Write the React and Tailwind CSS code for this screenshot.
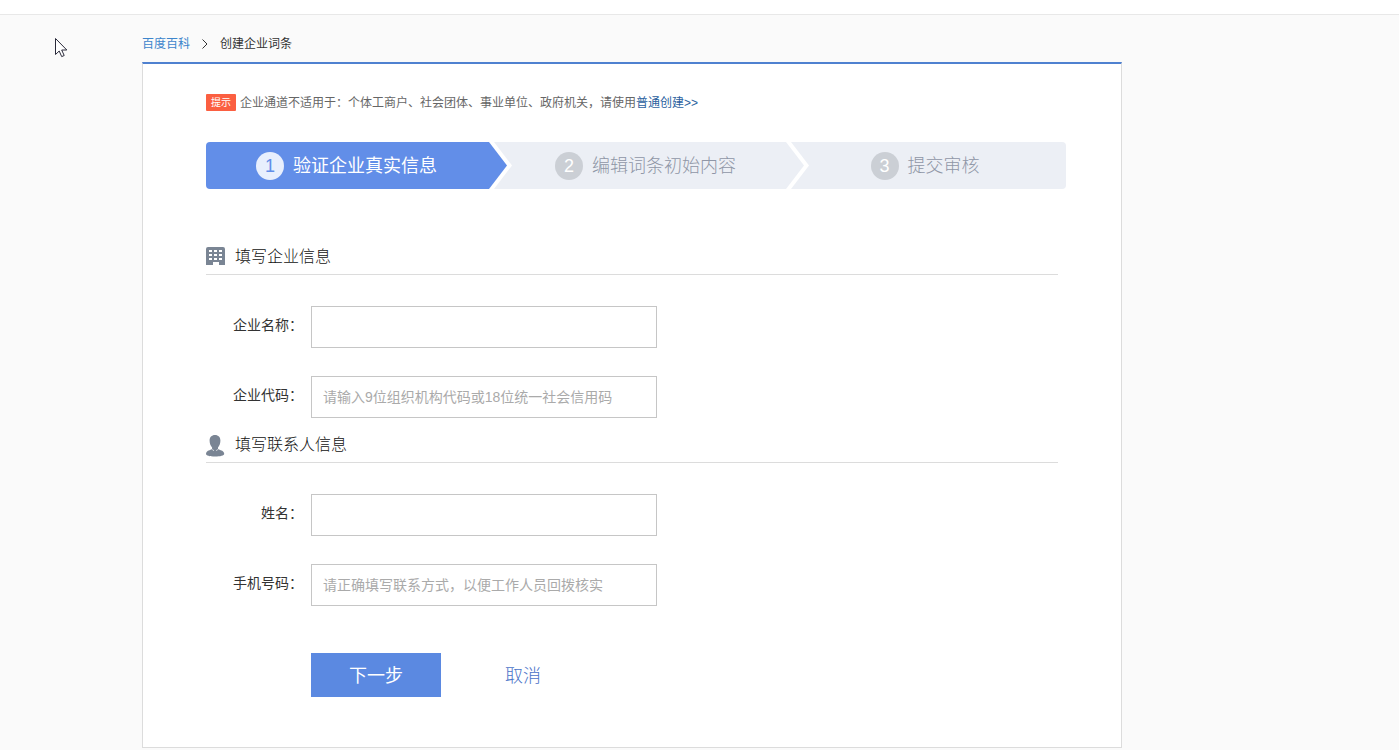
import { useState } from 'react'

const steps = [
  { no: 1, title: '验证企业真实信息', grow: 'flex-[283]', inner: '' },
  { no: 2, title: '编辑词条初始内容', grow: 'flex-[297]', inner: 'pl-[18px]' },
  { no: 3, title: '提交审核', grow: 'flex-[280]', inner: '' },
]

const sections = [
  {
    title: '填写企业信息',
    icon: BuildingIcon,
    fields: [
      { id: 'company', label: '企业名称：', placeholder: '' },
      { id: 'code', label: '企业代码：', placeholder: '请输入9位组织机构代码或18位统一社会信用码' },
    ],
  },
  {
    title: '填写联系人信息',
    icon: PersonIcon,
    fields: [
      { id: 'contact', label: '姓名：', placeholder: '' },
      { id: 'phone', label: '手机号码：', placeholder: '请正确填写联系方式，以便工作人员回拨核实' },
    ],
  },
]

function BuildingIcon() {
  return (
    <svg width="19" height="20" viewBox="0 0 19 20" aria-hidden="true">
      <path
        fill="#7a8594"
        fillRule="evenodd"
        d="M2 0h15a2 2 0 0 1 2 2v16h-6v-3H7v3H0V2a2 2 0 0 1 2-2zM3 3v2h3V3zM8 3v2h3V3zM13 3v2h3V3zM3 7v2h3V7zM8 7v2h3V7zM13 7v2h3V7zM3 11v2h3v-2zM8 11v2h3v-2zM13 11v2h3v-2z"
      />
    </svg>
  )
}

function PersonIcon() {
  return (
    <svg width="19" height="22" viewBox="0 0 19 22" className="mt-0.5" aria-hidden="true">
      <path
        fill="#7a8594"
        d="M9 0c3.400 0 5.400 2.200 5.400 5.600 0 2.900-.9 5.200-2.400 6.900v1.300c.3.700 1.300 1 2.700 1.400 2.400.7 3.500 1.800 3.500 3.600 0 2-3.900 2.700-9.200 2.700S0 20.800 0 18.800c0-1.800 1.100-2.900 3.500-3.600 1.400-.4 2.300-.7 2.600-1.400v-1.300C4.500 10.800 3.600 8.500 3.600 5.600 3.600 2.200 5.600 0 9 0z"
      />
      <path d="M6.500 14.200l1.200 1.800M11.600 14.200l-1.200 1.800" stroke="#fff" strokeWidth="0.700" />
    </svg>
  )
}

function Step({ step, active }) {
  return (
    <li className={`relative ${step.grow} ${active ? 'bg-[#628ee8]' : 'bg-[#eceff5]'}`}>
      {/* Arrow head of the previous step */}
      {step.no > 1 && (
        <svg className="absolute left-0 top-0" width="24" height="47" viewBox="0 0 24 47" aria-hidden="true">
          <path d="M0 0h5l18 23.500L5 47H0z" fill="#fff" />
          <path d="M0 0l18 23.500L0 47z" fill={step.no === 2 ? '#628ee8' : '#eceff5'} />
        </svg>
      )}
      <div className={`flex h-[47px] items-center justify-center gap-[9px] pr-0.5 ${step.inner}`}>
        <span
          className={`flex size-7 items-center justify-center rounded-full text-lg ${
            active ? 'bg-[#e8effd] text-[#628ee8]' : 'bg-[#cbcfd5] text-white'
          }`}
        >
          {step.no}
        </span>
        <span className={`text-lg ${active ? 'text-white' : 'font-light text-[#8f96a6]'}`}>{step.title}</span>
      </div>
    </li>
  )
}

function Field({ field, value, onChange }) {
  return (
    <div className="flex gap-2">
      <label htmlFor={field.id} className="w-[97px] shrink-0 text-right text-sm leading-[38px]">
        {field.label}
      </label>
      <input
        id={field.id}
        type="text"
        value={value}
        onChange={onChange}
        placeholder={field.placeholder}
        className="h-[42px] w-[346px] border border-[#c6c6c6] bg-white px-[11px] text-sm outline-none placeholder:text-[#aaa] focus:border-[#5b89e1]"
      />
    </div>
  )
}

export default function App() {
  const [form, setForm] = useState({ company: '', code: '', contact: '', phone: '' })

  const update = (id) => (e) => setForm({ ...form, [id]: e.target.value })

  return (
    <div className="min-h-screen bg-[#fafafa] pb-0.5 font-['Liberation_Sans','Noto_Sans_CJK_SC',sans-serif] text-[#333]">
      <header className="h-[15px] border-b border-[#e8e8e8] bg-white" />

      <main className="ml-[142px] max-w-[980px]">
        <nav className="flex h-[47px] items-center pt-[10px] text-xs">
          <a href="#" className="text-[#3d85cc]">百度百科</a>
          <svg className="ml-3 mr-3 text-[#333]" width="6" height="10" viewBox="0 0 6 10" fill="none" aria-hidden="true">
            <path d="M0.500 0.500L5 5L0.500 9.500" stroke="currentColor" />
          </svg>
          <span>创建企业词条</span>
        </nav>

        <div className="border border-t-2 border-[#dcdcdc] border-t-[#4f81d0] bg-white pb-[50px] pl-[63px] pr-[55px] pt-[30px]">
          <p className="flex h-[17px] items-center gap-1 text-xs text-[#666]">
            <span className="flex h-[17px] w-[30px] items-center justify-center rounded-[1px] bg-[#fb5f41] text-[10px] text-white">提示</span>
            <span>
              企业通道不适用于：个体工商户、社会团体、事业单位、政府机关，请使用
              <a href="#" className="text-[#2b5f9e]">普通创建&gt;&gt;</a>
            </span>
          </p>

          <ol className="mt-[31px] flex overflow-hidden rounded-[4px]">
            {steps.map((step) => (
              <Step key={step.no} step={step} active={step.no === 1} />
            ))}
          </ol>

          <form className="mr-2 mt-14" onSubmit={(e) => e.preventDefault()}>
            <div className="flex flex-col gap-[15px]">
              {sections.map(({ title, icon: Icon, fields }) => (
                <section key={title}>
                  <h2 className="flex h-[30px] items-center border-b border-[#dcdcdc] pb-1.5 text-base font-light text-[#111]">
                    <span className="flex w-[29px] shrink-0">
                      <Icon />
                    </span>
                    {title}
                  </h2>
                  <div className="mt-[31px] flex flex-col gap-7">
                    {fields.map((field) => (
                      <Field key={field.id} field={field} value={form[field.id]} onChange={update(field.id)} />
                    ))}
                  </div>
                </section>
              ))}
            </div>

            {/* Actions */}
            <div className="ml-[105px] mt-[47px] flex items-center gap-16 text-lg">
              <button type="submit" className="h-11 w-[130px] bg-[#5b89e1] pt-0.5 text-white">下一步</button>
              <a href="#" className="pt-0.5 font-light text-[#4a73c8]">取消</a>
            </div>
          </form>
        </div>
      </main>

      {/* Mouse pointer */}
      <svg className="pointer-events-none absolute left-[55px] top-[38px]" width="13" height="20" viewBox="0 0 13 20" aria-hidden="true">
        <path
          d="M0.500 0.500V16.500L4.200 13L6.700 18.600L9.200 17.500L6.700 12H11.800Z"
          fill="#fff"
          stroke="#2a2a3a"
        />
      </svg>
    </div>
  )
}
